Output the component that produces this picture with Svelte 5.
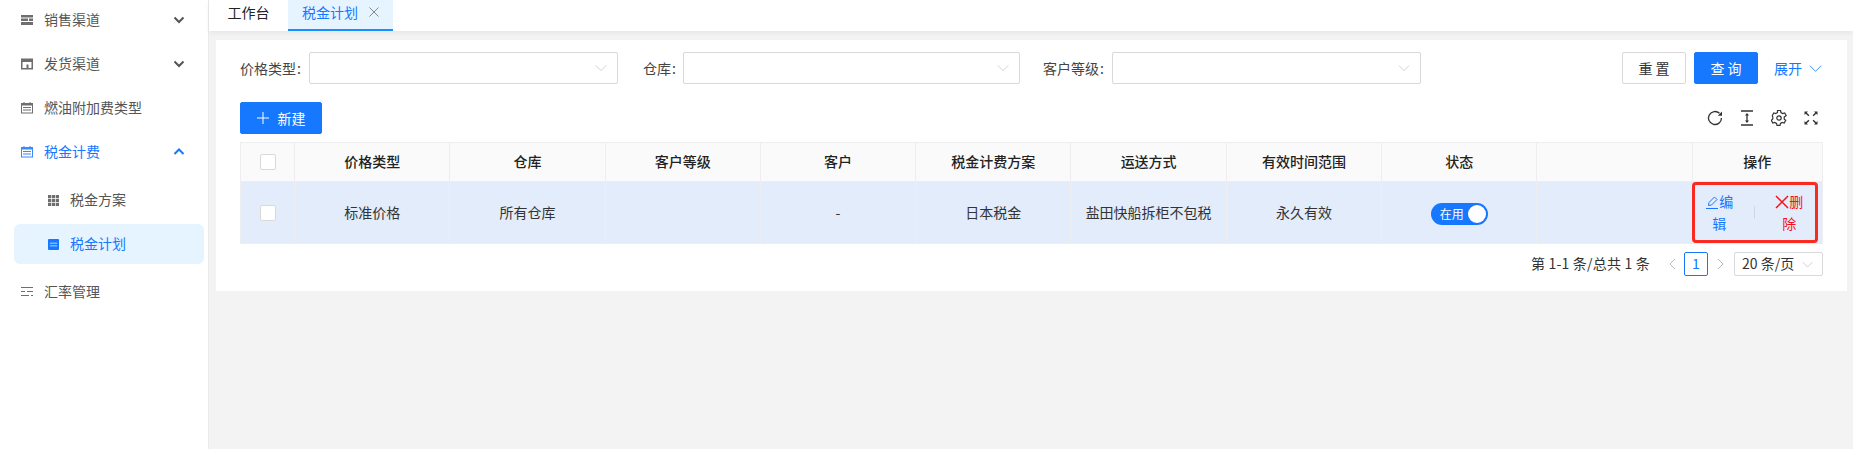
<script>
  const menu = [
    { label: '销售渠道', icon: 'list', arrow: 'down' },
    { label: '发货渠道', icon: 'window', arrow: 'down' },
    { label: '燃油附加费类型', icon: 'cal' },
    { label: '税金计费', icon: 'cal', arrow: 'up', open: true }
  ];
  const cols = ['价格类型', '仓库', '客户等级', '客户', '税金计费方案', '运送方式', '有效时间范围', '状态', ''];
  const row = ['标准价格', '所有仓库', '', '-', '日本税金', '盐田快船拆柜不包税', '永久有效'];
  const fields = [
    { label: '价格类型', cls: 'f1' },
    { label: '仓库', cls: 'f2' },
    { label: '客户等级', cls: 'f3' }
  ];
</script>

{#snippet chevron(cls)}
  <svg class={cls} viewBox="0 0 16 16" fill="none" stroke="currentColor"><path d="M1 4.500l7 7 7-7" /></svg>
{/snippet}

{#snippet menuIcon(kind)}
  <svg class="micon" viewBox="0 0 12 12" fill="currentColor">
    {#if kind === 'list'}
      <path d="M0 1h12v2.500H0zM0 4.500h7v2.500H0zM8 4.500h4v2.500H8zM0 8h12v3H0z" />
    {:else if kind === 'window'}
      <path fill-rule="evenodd" d="M0 .5h12v11H0zM1.500 4v6h4V6.500h2V10h3V4z" />
    {:else if kind === 'cal'}
      <path fill-rule="evenodd" d="M2.500 0h1v1h5V0h1v1H12v10.500H0V1h2.500zM1 3.500v7h10v-7zM2 5h8v1H2zM2 7.500h8v1H2z" />
    {:else if kind === 'grid'}
      <path d="M0 0h3.500v3.500H0zM4.250 0h3.500v3.500h-3.500zM8.500 0H12v3.500H8.500zM0 4.250h3.500v3.500H0zM4.250 4.250h3.500v3.500h-3.500zM8.500 4.250H12v3.500H8.500zM0 8.500h3.500V12H0zM4.250 8.500h3.500V12h-3.500zM8.500 8.500H12V12H8.500z" />
    {:else if kind === 'plan'}
      <path fill-rule="evenodd" d="M1 0h10a1 1 0 0 1 1 1v10a1 1 0 0 1-1 1H1a1 1 0 0 1-1-1V1a1 1 0 0 1 1-1zM2 4v1h8V4zM2 7v1h8V7z" />
    {:else}
      <path d="M0 1h12v1H0zM0 5h4v1H0zM6 5h6v1H6zM0 9h8v1H0zM10 9h2v1h-2z" />
    {/if}
  </svg>
{/snippet}

<div class="page">
  <aside class="side">
    {#each menu as m}
      <div class="item" class:on={m.open}>
        {@render menuIcon(m.icon)}
        <span class="grow">{m.label}</span>
        {#if m.arrow}
          <svg class="arrow" viewBox="0 0 12 12" fill="none" stroke="currentColor" stroke-width="2">
            <path d={m.arrow === 'down' ? 'M1.500 3.500l4.500 4.500 4.500-4.500' : 'M1.500 8l4.500-4.500 4.500 4.500'} />
          </svg>
        {/if}
      </div>
    {/each}
    <div class="sub">
      <div class="item subitem">{@render menuIcon('grid')}<span>税金方案</span></div>
      <div class="item subitem sel">{@render menuIcon('plan')}<span>税金计划</span></div>
    </div>
    <div class="item">{@render menuIcon('bars')}<span>汇率管理</span></div>
  </aside>

  <main class="main">
    <nav class="tabs">
      <div class="tab">工作台</div>
      <div class="tab active">
        税金计划
        <svg class="close" viewBox="0 0 10 10" fill="none" stroke="currentColor"><path d="M0.500 0.500l9 9M9.500 0.500l-9 9" /></svg>
      </div>
    </nav>

    <section class="card">
      <div class="form">
        {#each fields as f}
          <div class="field {f.cls}">
            <span class="lab">{f.label}<em>:</em></span>
            <div class="select">{@render chevron('schev')}</div>
          </div>
        {/each}
        <div class="actions">
          <button class="btn">重 置</button>
          <button class="btn primary">查 询</button>
          <span class="expand">展开 {@render chevron('echev')}</span>
        </div>
      </div>

      <div class="toolbar">
        <button class="btn primary add">
          <svg viewBox="0 0 12 12" fill="none" stroke="currentColor"><path d="M6 0v12M0 6h12" /></svg>
          新建
        </button>
        <div class="tools">
          <svg viewBox="0 0 16 16" fill="none" stroke="currentColor" stroke-width="1.300"><path d="M14.500 8a6.500 6.500 0 1 1-2-4.700" /><path fill="currentColor" stroke="none" d="M15 1.500v4.200h-4.200z" /></svg>
          <svg viewBox="0 0 16 16" fill="none" stroke="currentColor" stroke-width="1.300"><path d="M2 1h12M2 15h12M8 4v8" /><path fill="currentColor" stroke="none" d="M8 3l2 2.500H6zM8 13l-2-2.500h4z" /></svg>
          <svg viewBox="0 0 16 16" fill="none" stroke="currentColor" stroke-width="1.200"><path d="M6.500 1h3l.5 2 1.700 1 2-.6 1.500 2.600L13.200 7.500v1.900l1.500 1.500-1.500 2.600-2-.6-1.700 1-.5 2h-3l-.5-2-1.700-1-2 .6-1.500-2.600 1.500-1.500V7.500L1.300 6l1.500-2.600 2 .6 1.700-1z" transform="translate(0 -.5)" /><circle cx="8" cy="8" r="2.200" /></svg>
          <svg viewBox="0 0 16 16" fill="currentColor"><path d="M1.500 1.500h3.500L3.800 2.700l2.600 2.600-1 1-2.600-2.600L1.500 5zM14.500 1.500V5l-1.300-1.300-2.600 2.600-1-1 2.600-2.600L11 1.500zM1.500 14.500V11l1.300 1.300 2.600-2.600 1 1-2.600 2.600L5 14.500zM14.500 14.500H11l1.200-1.200-2.600-2.600 1-1 2.600 2.600 1.300-1.300z" /></svg>
        </div>
      </div>

      <div class="table">
        <div class="tr head">
          <div class="td chk"><i class="box"></i></div>
          {#each cols as c}<div class="td txt">{c}</div>{/each}
          <div class="td txt">操作</div>
        </div>
        <div class="tr body">
          <div class="td chk"><i class="box"></i></div>
          {#each row as c}<div class="td txt">{c}</div>{/each}
          <div class="td"><span class="switch">在用<b></b></span></div>
          <div class="td"></div>
          <div class="td ops">
            <div class="opbox">
              <span class="link">
                <svg viewBox="0 0 14 14" fill="none" stroke="currentColor"><path d="M1 13.500h12M3.500 10.500l.5-3L9.500 2l2.500 2.500-5.500 5.500z" /></svg>编辑
              </span>
              <i class="sep"></i>
              <span class="link del">
                <svg viewBox="0 0 14 14" fill="none" stroke="currentColor" stroke-width="1.500"><path d="M1 1l12 12M13 1L1 13" /></svg>删除
              </span>
            </div>
          </div>
        </div>
      </div>

      <div class="pager">
        <span class="total">第 1-1 条/总共 1 条</span>
        <svg class="pg first" viewBox="0 0 8 12" fill="none" stroke="currentColor"><path d="M7 1L2 6l5 5" /></svg>
        <span class="cur">1</span>
        <svg class="pg" viewBox="0 0 8 12" fill="none" stroke="currentColor"><path d="M1 1l5 5-5 5" /></svg>
        <span class="size"><span class="sizetxt">20 条/页</span> {@render chevron('pchev')}</span>
      </div>
    </section>
  </main>
</div>

<style>
  :global(body) { margin: 0; background: #f3f3f3; }
  .page {
    display: flex;
    width: 1853px;
    height: 449px;
    overflow: hidden;
    font: 14px/22px "Noto Sans CJK SC", "Noto Sans", sans-serif;
    color: #333;
    background: #f3f3f3;
  }
  .side {
    width: 209px;
    flex: none;
    box-sizing: border-box;
    background: #fff;
    border-right: 1px solid #eaeaea;
    padding: 0 4px 0 14px;
    color: #555;
  }
  .item {
    display: flex;
    align-items: center;
    box-sizing: border-box;
    height: 40px;
    margin-bottom: 4px;
    padding: 0 16px 0 7px;
    gap: 11px;
    border-radius: 6px;
  }
  .item span { padding-bottom: 2px; }
  .item.on { color: #1677ff; margin-bottom: 0; }
  .grow { flex: 1; }
  .micon { width: 12px; height: 12px; flex: none; opacity: 0.85; }
  .arrow { width: 12px; height: 12px; flex: none; margin-right: 3px; }
  .sub { padding-top: 8px; padding-bottom: 4px; }
  .subitem { padding-left: 34px; }
  .subitem .micon { width: 11px; height: 11px; }
  .sel { background: #e6f4ff; color: #1677ff; }
  .sel .micon { opacity: 1; }

  .main { flex: 1; min-width: 0; }
  .tabs {
    display: flex;
    height: 31px;
    background: #fff;
    box-shadow: 0 2px 5px rgba(0, 0, 0, 0.06);
    color: #222;
  }
  .tab {
    display: flex;
    align-items: center;
    justify-content: center;
    height: 31px;
    width: 79px;
    padding-bottom: 7px;
    box-sizing: border-box;
  }
  .tab.active {
    width: 105px;
    gap: 11px;
    background: #e6f4ff;
    border-bottom: 2px solid #1890ff;
    padding-bottom: 5px;
    color: #1677ff;
  }
  .close { width: 10px; height: 10px; color: #888; }

  .card {
    margin: 9px 6px 0 7px;
    box-sizing: border-box;
    width: 1631px;
    height: 251px;
    background: #fff;
    padding: 12px 24px 0;
  }
  .form { display: flex; align-items: center; height: 32px; }
  .field { display: flex; align-items: center; }
  .lab { flex: 1; color: #444; }
  .lab em { font-style: normal; margin-left: 1px; }
  .f1 { width: 378px; margin-right: 25px; }
  .f1 .select { width: 309px; }
  .f2 { width: 377px; margin-right: 23px; }
  .f2 .select { width: 337px; }
  .f3 { width: 378px; }
  .f3 .select { width: 309px; }
  .select {
    box-sizing: border-box;
    height: 32px;
    border: 1px solid #d9d9d9;
    border-radius: 2px;
    background: #fff;
    display: flex;
    align-items: center;
    justify-content: flex-end;
    padding-right: 10px;
  }
  .schev { width: 12px; height: 12px; color: #c4c4c4; }
  .actions { margin-left: auto; display: flex; align-items: center; gap: 8px; }
  .btn {
    box-sizing: border-box;
    width: 64px;
    height: 32px;
    padding: 0;
    border: 1px solid #d9d9d9;
    border-radius: 2px;
    background: #fff;
    color: #333;
    font: inherit;
  }
  .primary { background: #1677ff; border-color: #1677ff; color: #fff; }
  .expand { color: #1677ff; display: flex; align-items: center; gap: 7px; margin-left: 8px; width: 49px; white-space: nowrap; }
  .echev { width: 13px; height: 13px; flex: none; }

  .toolbar { display: flex; align-items: center; justify-content: space-between; margin-top: 18px; height: 32px; }
  .add { width: 82px; display: flex; align-items: center; justify-content: center; gap: 9px; }
  .add svg { width: 12px; height: 12px; }
  .tools { display: flex; gap: 16px; padding-right: 4px; color: #333; }
  .tools svg { width: 16px; height: 16px; }

  .table { margin-top: 8px; width: 1583px; border: 1px solid #eee; box-sizing: border-box; }
  .tr {
    display: grid;
    grid-template-columns: 54px repeat(9, 155.3px) 1fr;
  }
  .td {
    display: flex;
    align-items: center;
    justify-content: center;
    box-sizing: border-box;
    border-right: 1px solid #eee;
    text-align: center;
    min-width: 0;
  }
  .td:last-child { border-right: 0; }
  .txt { padding-bottom: 2px; }
  .head { height: 38px; background: #fafafa; font-weight: 500; color: #222; border-bottom: 1px solid #eee; }
  .body { height: 61px; background: #e2ecfb; }
  .box {
    display: block;
    box-sizing: border-box;
    width: 16px;
    height: 16px;
    border: 1px solid #d9d9d9;
    border-radius: 2px;
    background: #fff;
  }
  .switch {
    position: relative;
    box-sizing: border-box;
    width: 57px;
    height: 22px;
    margin-top: 2px;
    border-radius: 11px;
    background: #1677ff;
    color: #fff;
    font-size: 12px;
    line-height: 21px;
    padding-left: 9px;
    text-align: left;
  }
  .switch b {
    position: absolute;
    right: 2px;
    top: 2px;
    width: 18px;
    height: 18px;
    border-radius: 50%;
    background: #fff;
  }
  .ops { justify-content: flex-start; }
  .opbox {
    box-sizing: border-box;
    display: flex;
    align-items: center;
    flex: none;
    width: 126px;
    height: 61px;
    margin-left: -1px;
    border: 3px solid #fb2a20;
    border-radius: 4px;
  }
  .link {
    flex: none;
    box-sizing: border-box;
    width: 49px;
    padding: 0 10px 1px;
    color: #1677ff;
    line-height: 22px;
    text-align: center;
    font-size: 14px;
  }
  .link svg { width: 14px; height: 14px; vertical-align: -2px; }
  .del { color: #f5101a; width: 47px; padding: 0 9px 1px; margin-left: 11px; }
  .sep { width: 1px; height: 13px; background: #cfd8e6; flex: none; margin-left: 10px; }

  .pager {
    display: flex;
    align-items: center;
    justify-content: flex-end;
    margin-top: 8px;
    height: 24px;
  }
  .total { padding-bottom: 2px; letter-spacing: 0.2px; }
  .pg { width: 8px; height: 12px; color: #bbb; }
  .first { margin-left: 18px; margin-right: 8px; }
  .cur {
    box-sizing: border-box;
    width: 24px;
    height: 24px;
    line-height: 20px;
    text-align: center;
    border: 1px solid #1677ff;
    border-radius: 2px;
    color: #1677ff;
    margin-right: 9px;
  }
  .size {
    box-sizing: border-box;
    width: 89px;
    height: 24px;
    margin-left: 9px;
    border: 1px solid #d9d9d9;
    border-radius: 2px;
    padding-left: 7px;
    display: flex;
    align-items: center;
    gap: 8px;
    white-space: nowrap;
  }
  .sizetxt { padding-bottom: 2px; }
  .pchev { width: 11px; height: 11px; color: #bbb; flex: none; }
</style>
